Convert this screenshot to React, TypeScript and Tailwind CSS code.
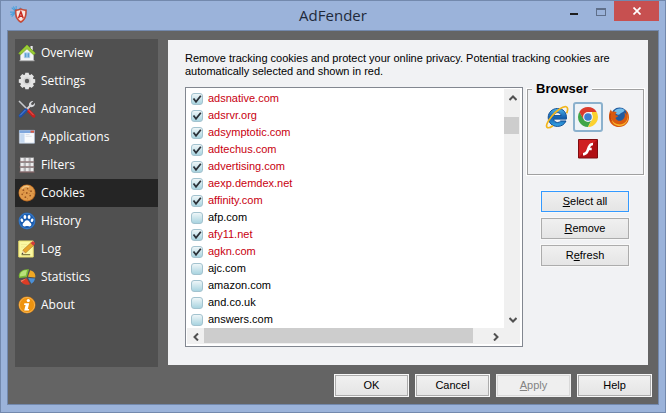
import type { ReactNode } from 'react';
import clsx from 'clsx';

function Icon({ children, className = 'size-[18px]' }: { children: ReactNode; className?: string }) {
  return (
    <svg viewBox="0 0 18 18" className={clsx('block shrink-0', className)} aria-hidden="true">
      {children}
    </svg>
  );
}

function OverviewIcon() {
  return (
    <Icon>
      <path d="M12.500 2h2.200v4h-2.200z" fill="#e8e8e8" />
      <path d="M2.500 9 9 3l6.500 6v7.500h-13z" fill="#f3f4f6" stroke="#c5c9d0" strokeWidth=".6" />
      <path d="M9 1 .8 9.200l1.600 1.600L9 4.600l6.600 6.200 1.600-1.600z" fill="#9acb35" stroke="#7fb02a" strokeWidth="1" />
      <path d="M6.300 8.800h5.400v5H6.300z" fill="#5b9fd4" stroke="#bcd6ec" strokeWidth=".7" />
      <path d="M9 9v4.600" stroke="#d4e8f7" strokeWidth=".8" />
      <path d="M1.500 16.700h15" stroke="#b9b9b9" />
    </Icon>
  );
}

function SettingsIcon() {
  return (
    <Icon>
      <g fill="#e4e4e4">
        <circle cx="9" cy="9" r="6.800" />
        <path d="M7.300.8h3.400l.5 3H6.800zM7.300 17.200h3.400l.5-3H6.800zM.8 7.300v3.400l3 .5V6.800zM17.200 7.300v3.400l-3 .5V6.800z" />
        <path d="m2 4.400 2.400-2.400 2.500 1.800L3.800 6.900zM16 4.400 13.600 2l-2.500 1.800 3.100 3.100zM2 13.600 4.400 16l2.500-1.800-3.100-3.100zM16 13.600 13.600 16l-2.500-1.800 3.100-3.100z" />
      </g>
      <circle cx="9" cy="9" r="3.800" fill="#d4d4d4" />
      <circle cx="9" cy="9" r="2.200" fill="#5a5a5a" />
    </Icon>
  );
}

function AdvancedIcon() {
  return (
    <Icon>
      <path d="m1 1 8.500 8.500" stroke="#c6c8cb" strokeWidth="1.600" />
      <path d="m9.300 9.300 6.300 6.600" stroke="#c6201e" strokeWidth="3.400" strokeLinecap="round" />
      <path d="m9.600 9 6 6.200" stroke="#f0756c" strokeWidth=".8" />
      <path d="m8 10 5-5" stroke="#d3d5d8" strokeWidth="2" />
      <path d="M11 5.600c-.4-2.600 1.600-4.900 4.300-4.600l-2.200 2.300.3 1.500 1.600.2 2-2.200c.4 2.800-1.800 4.900-4.600 4.300z" fill="#d9dbde" />
      <path d="m8 10-5.600 5.800" stroke="#1d4fa8" strokeWidth="3.400" strokeLinecap="round" />
      <path d="m7.500 9.900-5.400 5.500" stroke="#6d9ce4" strokeWidth=".8" />
    </Icon>
  );
}

function ApplicationsIcon() {
  return (
    <Icon>
      <path d="M1.400 2.400h15v12.800h-15z" fill="#eaf1fa" stroke="#b9c7da" strokeWidth=".8" />
      <path d="M1.400 2.400h15V5h-15z" fill="#7fa7dd" />
      <path d="M12.600 2.600h3.600v2.100h-3.600z" fill="#dc5a40" />
      <path d="M2.200 5.400h4.200v9.200H2.200z" fill="#c5d9f0" />
      <path d="M7 5.600h8.800v8.800H7z" fill="#f9fbfd" />
      <path d="M7.600 6.500h4M7.600 8.300h6" stroke="#d5dbe3" strokeWidth=".8" />
    </Icon>
  );
}

function FiltersIcon() {
  return (
    <Icon>
      {[2, 7, 12].map((y) => (
        <g key={y}>
          <path d={`M2 ${y - 0.5}h14v4.200h-14z`} fill="#b4b4b6" />
          <path d={`M3 ${y}h2.600v3.200H3zM8 ${y}h2.600v3.200H8zM12.800 ${y}h2.200v3.200h-2.200z`} fill="#ececed" />
          <path d={`M1.500 ${y + 4}h15`} stroke="#9c6f72" strokeWidth=".9" />
        </g>
      ))}
    </Icon>
  );
}

function CookiesIcon() {
  return (
    <Icon>
      <circle cx="9" cy="9" r="8.500" fill="#b96a23" />
      <circle cx="8.800" cy="8.700" r="7.800" fill="#e09a4a" />
      <path d="M4 4.600c2-2.300 5-2.600 7.200-1.800" stroke="#f3c785" strokeWidth="1.400" fill="none" />
      <g fill="#9a5420">
        <circle cx="5.400" cy="6.200" r=".9" />
        <circle cx="9.600" cy="4.800" r=".8" />
        <circle cx="13" cy="7.200" r=".9" />
        <circle cx="8.800" cy="9" r=".9" />
        <circle cx="4.200" cy="10.400" r=".8" />
        <circle cx="12.200" cy="11.600" r=".9" />
        <circle cx="7.400" cy="13.200" r=".9" />
      </g>
      <path d="m6.500 8.200-1.400.9M11.600 9.200l-1 1M10 14.400l-.8.6M14.800 9.600l.8.300M10.600 6.600l1 .2" stroke="#b2692a" strokeWidth=".8" />
    </Icon>
  );
}

function HistoryIcon() {
  return (
    <Icon>
      <circle cx="9" cy="9" r="8.500" fill="#2567b4" />
      <circle cx="9" cy="9" r="7.600" fill="#1a5cb0" stroke="#4a8ad4" strokeWidth=".6" />
      <g fill="#fff">
        <ellipse cx="6.900" cy="5" rx="1.400" ry="2.100" />
        <ellipse cx="11.100" cy="5" rx="1.400" ry="2.100" />
        <ellipse cx="3.900" cy="8.200" rx="1.300" ry="1.800" transform="rotate(-20 3.900 8.200)" />
        <ellipse cx="14.100" cy="8.200" rx="1.300" ry="1.800" transform="rotate(20 14.100 8.200)" />
        <path d="M9 8.200c2 0 2.500 1.800 3.600 2.800 1.500 1.400.5 3.700-1.300 3.400-1-.2-1.300-.5-2.300-.5s-1.300.3-2.300.5c-1.800.3-2.800-2-1.300-3.400C6.500 10 7 8.200 9 8.200z" />
      </g>
    </Icon>
  );
}

function LogIcon() {
  return (
    <Icon>
      <path d="M.8 1h14.400v16H.8z" fill="#fbf8a2" stroke="#e8dc6a" />
      <path d="M3 4.500h6M3 7h4" stroke="#f1eb92" />
      <path d="m3.600 14.200 1.200-4 2.800 2.800z" fill="#f2d6a8" />
      <path d="m4.800 10.200 8-7.400 2.700 2.800-7.900 7.400z" fill="#e9a52c" stroke="#9c6a17" strokeWidth=".5" />
      <path d="m12.600 3 1.600-1.500c1-.7 3.400 1.300 2.800 2.600L15.400 5.700z" fill="#d23a3a" />
      <path d="m3.600 14.200.5-1.600 1.200 1.100z" fill="#333" />
      <path d="M3.600 14.700h8.600" stroke="#6f6a35" strokeWidth="1.100" />
    </Icon>
  );
}

function StatisticsIcon() {
  return (
    <Icon>
      <path d="M8.800 9.200 1.200 10C-.6 4.800 4 .6 11 1.200z" fill="#7cba35" />
      <path d="M7.800 7.600 2 8.400C1.400 4.800 4.500 2.200 9 2z" fill="#b9e07a" />
      <path d="m10 8.800 2.200-6.600c3.600.8 5.700 4.200 5 7.200z" fill="#f0a824" />
      <path d="m10.200 10 6.800.6c-.5 2.400-1.800 4.200-3.600 5.200z" fill="#4a90d8" />
      <path d="m8.600 10.300 3.400 6c-3.500 1.300-7.600.2-9.500-3.500z" fill="#dc3c25" />
      <path d="m8.600 10.300-6.100 2.500.9 1.300z" fill="#f08468" />
    </Icon>
  );
}

function AboutIcon() {
  return (
    <Icon>
      <circle cx="9" cy="9" r="8.500" fill="#d97d0a" />
      <circle cx="9" cy="9" r="7.600" fill="#ee930f" stroke="#f9c36b" strokeWidth=".7" />
      <circle cx="10.300" cy="4.500" r="1.600" fill="#fff" />
      <path d="M6.400 7.300h4.800l-1.400 5.600h1.400l-.4 1.700H6.200l1.400-5.600H6z" fill="#fff" />
    </Icon>
  );
}

function AppLogo() {
  return (
    <Icon className="size-[17px]">
      <g stroke="#4ba1dc" strokeWidth="1.200">
        <path d="M6.500 0v13M0 6.500h12M1.800 1.800l9.400 9.400M11.200 1.800l-9.400 9.400M3.600.6l5.800 11.800M.6 9.400 12.400 3.600" />
      </g>
      <path d="M11.500 2.500c1.500 1.200 3.500 1.500 6 1.400.3 6-.8 11-6 13.800-5.200-2.800-6.300-7.800-6-13.800 2.500.1 4.500-.2 6-1.400z" fill="#d24a35" stroke="#a8432f" strokeWidth=".5" />
      <path d="M11.500 4.100c1.300.8 2.800 1.200 4.600 1.200.1 5-1 8.400-4.600 10.700-3.600-2.300-4.700-5.700-4.600-10.700 1.800 0 3.300-.4 4.600-1.200z" fill="#f9e7df" />
      <path d="m9 13 2.500-7 2.500 7M9.800 10.900h3.400" fill="none" stroke="#c8281e" strokeWidth="1.500" />
    </Icon>
  );
}

function IeIcon() {
  return (
    <svg viewBox="0 0 24 24" className="size-6" aria-hidden="true">
      <defs>
        <linearGradient id="ie" x1="0" y1="0" x2="0" y2="1">
          <stop offset="0" stopColor="#4fb6ec" />
          <stop offset=".5" stopColor="#1460b0" />
          <stop offset="1" stopColor="#35a6e6" />
        </linearGradient>
      </defs>
      <path
        d="M12.500 3.500c-5.300 0-9.300 3.900-9.300 9s3.900 8.900 9.300 8.900c4 0 7-2 8.500-5.400h-5.400c-.7 1-1.700 1.500-3 1.500-2.200 0-3.600-1.300-3.900-3.400h12.700C22 7.600 18.400 3.500 12.500 3.500zM8.800 10.600c.4-1.900 1.700-3 3.700-3s3.300 1.100 3.600 3z"
        fill="url(#ie)"
        stroke="#124f94"
        strokeWidth="1"
      />
      <path d="M21.700 8.200c1.400-3.500 1.300-6-.6-6.500-3-.8-9.500 3.800-14.300 9.600-4.800 5.700-6.500 10.400-4.300 11.300 1.300.5 3.200-.3 5.400-1.900" fill="none" stroke="#f2b61c" strokeWidth="1.700" />
    </svg>
  );
}

function ChromeIcon() {
  return (
    <svg viewBox="0 0 20 20" className="size-5" aria-hidden="true">
      <path d="M1.340 5A10 10 0 0 0 10 20l4-8-8.600-.5z" fill="#3fa648" />
      <path d="M18.660 5A10 10 0 0 1 10 20l4-7.700V5z" fill="#fbd12f" />
      <path d="M10 5h8.660A10 10 0 0 0 1.340 5l4.330 7.500z" fill="#db3b2c" />
      <circle cx="10" cy="10" r="4.900" fill="#f4f4f4" />
      <circle cx="10" cy="10" r="3.800" fill="#3d7fd0" />
    </svg>
  );
}

function FirefoxIcon() {
  return (
    <svg viewBox="0 0 20 20" className="size-5" aria-hidden="true">
      <circle cx="10.500" cy="9" r="8.500" fill="#215a9e" />
      <path d="M5 4.500C7 1.500 12 .5 15.500 3c-.5 2.500-3 2-4.500 4-1.500 1.500-4 .5-6-2.500z" fill="#74bdea" />
      <path
        d="M1.800 2.500c.4 1.200 1 1.900 1.800 2.300 1.500-.5 2.900-.2 4.200.8-1.400.6-1.700 1.500-1 2.600l2.400.5c-.4 1.300-1.900 1.500-2.700 2.300.9 2.600 4 3.600 6.400 2.200 2.900-1.400 3.600-4.700 2.400-7.700 1.300.8 2 1.600 2.200 2.600.2-2-.2-3.700-1.300-5.600 2.700 2 3.900 5 3.800 8.300-.3 5.300-4.400 9.200-9.900 9.200C4.300 20 0 15.800 0 10.400 0 7.200.4 4.700 1.800 2.500z"
        fill="#d9590f"
      />
      <path d="M18.700 7c.8 5.800-2.700 10.400-8 10.400-4 0-6.800-2.200-8.300-5.400 1 5 4.700 7 8.200 7 5.700 0 10-5.400 8.100-12z" fill="#f9b52b" />
      <path d="M1.500 6.500C.6 9.500 1 12 2.200 14" fill="none" stroke="#b53a0c" />
    </svg>
  );
}

function FlashIcon() {
  return (
    <svg viewBox="0 0 20 20" className="size-5" aria-hidden="true">
      <path d="M.5.500h19v18.500H.5z" fill="#b01014" stroke="#7f0d10" />
      <path d="M1 1h18L1 18z" fill="#cf2022" />
      <path d="M15 3.800c-3.600.1-4.900 2.700-6 5.800-1 3-1.900 4.200-4 4.400v2.500c3.600-.1 5.200-2.500 6.200-5.300h2.500V8.800h-1.600c.6-1.500 1.300-2.500 2.900-2.600z" fill="#fff" />
    </svg>
  );
}

const navItems = [
  { label: 'Overview', icon: <OverviewIcon /> },
  { label: 'Settings', icon: <SettingsIcon /> },
  { label: 'Advanced', icon: <AdvancedIcon /> },
  { label: 'Applications', icon: <ApplicationsIcon /> },
  { label: 'Filters', icon: <FiltersIcon /> },
  { label: 'Cookies', icon: <CookiesIcon />, active: true },
  { label: 'History', icon: <HistoryIcon /> },
  { label: 'Log', icon: <LogIcon /> },
  { label: 'Statistics', icon: <StatisticsIcon /> },
  { label: 'About', icon: <AboutIcon /> },
];

const cookies = [
  { domain: 'adsnative.com', tracking: true },
  { domain: 'adsrvr.org', tracking: true },
  { domain: 'adsymptotic.com', tracking: true },
  { domain: 'adtechus.com', tracking: true },
  { domain: 'advertising.com', tracking: true },
  { domain: 'aexp.demdex.net', tracking: true },
  { domain: 'affinity.com', tracking: true },
  { domain: 'afp.com', tracking: false },
  { domain: 'afy11.net', tracking: true },
  { domain: 'agkn.com', tracking: true },
  { domain: 'ajc.com', tracking: false },
  { domain: 'amazon.com', tracking: false },
  { domain: 'and.co.uk', tracking: false },
  { domain: 'answers.com', tracking: false },
];

function TitleBar() {
  return (
    <header className="grid h-[29px] grid-cols-[1fr_auto_1fr] items-start">
      <div className="pt-[5px] pl-[9px]">
        <AppLogo />
      </div>
      <h1 className="pt-1 font-['Open_Sans',sans-serif] text-[15px] leading-5 text-[#1f2a3a]">AdFender</h1>
      <div className="flex justify-end pr-1.5">
        <button aria-label="Minimize" className="flex h-5 w-7 items-center justify-center pt-1.5">
          <span className="h-0.5 w-2 bg-[#1e1e1e]" />
        </button>
        <button aria-label="Maximize" className="flex h-5 w-[26px] items-center justify-center pt-0.5">
          <span className="h-2 w-2.5 border border-t-2 border-[#5f6f8a]" />
        </button>
        <button aria-label="Close" className="flex h-5 w-[45px] items-center justify-center bg-[#c75050]">
          <svg viewBox="0 0 8 8" className="size-2" aria-hidden="true">
            <path d="m.5.500 7 7m0-7-7 7" stroke="#fff" strokeWidth="1.700" />
          </svg>
        </button>
      </div>
    </header>
  );
}

function Sidebar() {
  return (
    <nav className="w-[143px] shrink-0 bg-[#505050] font-['Open_Sans',sans-serif] text-xs text-white">
      {navItems.map((item) => (
        <a
          key={item.label}
          href="#"
          className={clsx('flex h-7 items-center gap-[5px] pl-[3px]', item.active && 'bg-[#252525]')}
        >
          {item.icon}
          {item.label}
        </a>
      ))}
    </nav>
  );
}

function Arrow({ d, label }: { d: string; label: string }) {
  return (
    <button aria-label={label} className="flex size-[17px] shrink-0 items-center justify-center">
      <svg viewBox="0 0 8 8" className="size-2" aria-hidden="true">
        <path d={d} fill="none" stroke="#505050" strokeWidth="2" />
      </svg>
    </button>
  );
}

function CookieList() {
  return (
    <div className="grid h-[260px] min-w-0 flex-1 grid-cols-[1fr_16px] grid-rows-[1fr_16px] border border-[#828790] bg-white p-px pr-0.5 pb-0.5">
      <ul className="overflow-hidden pt-px">
        {cookies.map(({ domain, tracking }) => (
          <li key={domain}>
            <label className={clsx('flex h-[17px] items-center gap-[5px] pl-1', tracking ? 'text-[#c8000f]' : 'text-black')}>
              <span className="grid">
                <input
                  type="checkbox"
                  defaultChecked={tracking}
                  className="peer col-start-1 row-start-1 size-3 appearance-none rounded-[3px] border border-[#a3c3cf] bg-linear-to-b from-[#eef6f8] to-[#a9d4e0]"
                />
                <svg viewBox="0 0 12 12" className="invisible col-start-1 row-start-1 size-3 peer-checked:visible" aria-hidden="true">
                  <path d="m2.500 5.500 2.500 3.200 4.800-6" fill="none" stroke="#2b3138" strokeWidth="1.800" />
                </svg>
              </span>
              {domain}
            </label>
          </li>
        ))}
      </ul>
      <div className="flex flex-col bg-[#f0f0f0]">
        <Arrow label="Scroll up" d="M.5 6 4 2.500 7.500 6" />
        <div className="flex-1 pt-[11px]">
          <div className="h-[17px] w-[15px] bg-[#cdcdcd]" />
        </div>
        <Arrow label="Scroll down" d="M.5 2 4 5.500 7.500 2" />
      </div>
      <div className="flex bg-[#f0f0f0]">
        <Arrow label="Scroll left" d="M6 .5 2.500 4 6 7.500" />
        <div className="flex-1 pr-3.5">
          <div className="h-[15px] bg-[#cdcdcd]" />
        </div>
        <Arrow label="Scroll right" d="M2 .5 5.500 4 2 7.500" />
      </div>
      <div className="bg-[#f0f0f0]" />
    </div>
  );
}

function PushButton({ children, className, disabled }: { children: ReactNode; className?: string; disabled?: boolean }) {
  return (
    <button
      disabled={disabled}
      className={clsx(
        'h-[21px] border bg-linear-to-b outline-1',
        disabled ? 'border-[#d9d9d9] from-[#efefef] to-[#efefef] text-[#838383] outline-[#f0f0f0]' : 'from-[#f0f0f0] to-[#e5e5e5] text-black outline-[#f8f8f8]',
        className,
      )}
    >
      {children}
    </button>
  );
}

function BrowserPicker() {
  return (
    <fieldset className="relative mt-0.5 h-[86px] w-[117px] border border-[#a0a0a0] pl-[5px] outline-1 outline-white">
      <legend className="absolute -top-[9px] left-1 bg-[#f1f2f4] px-1 text-[13px] leading-4 font-bold">Browser</legend>
      <div className="flex items-center justify-center gap-px pt-3">
        <button aria-label="Internet Explorer" className="flex size-[30px] items-center justify-center">
          <IeIcon />
        </button>
        <button
          aria-label="Chrome"
          aria-pressed="true"
          className="flex size-[30px] items-center justify-center rounded-[3px] border-2 border-[#8bb1cd] bg-[#eef3f7]"
        >
          <ChromeIcon />
        </button>
        <button aria-label="Firefox" className="flex size-[30px] items-center justify-center">
          <FirefoxIcon />
        </button>
      </div>
      <div className="flex justify-center pt-[7px]">
        <button aria-label="Flash">
          <FlashIcon />
        </button>
      </div>
    </fieldset>
  );
}

export default function App() {
  return (
    <div className="flex h-screen min-h-[413px] flex-col border border-[#7389ad] bg-[#9bb3da] px-1.5 pb-[7px] font-['Liberation_Sans',Arial,sans-serif] text-[11px] leading-[13px] text-black">
      <div className="-mx-1.5">
        <TitleBar />
      </div>
      <main className="flex flex-1 flex-col border border-[#7389ad] bg-[#646464]">
        <div className="flex flex-1 gap-2.5 pt-2 pr-2.5 pl-[7px]">
          <Sidebar />
          <section className="mt-px mb-0.5 min-w-0 flex-1 bg-[#f1f2f4] pt-3 pr-1 pl-[17px]">
            <p className="pr-5">
              Remove tracking cookies and protect your online privacy. Potential tracking cookies are automatically
              selected and shown in red.
            </p>
            <div className="mt-[9px] flex gap-1">
              <CookieList />
              <div className="flex shrink-0 flex-col">
                <BrowserPicker />
                <div className="flex flex-col gap-1.5 pt-4 pr-[15px] pl-3.5">
                  <PushButton className="border-[#3399ff]">
                    <u>S</u>elect all
                  </PushButton>
                  <PushButton className="border-[#acacac]">
                    <u>R</u>emove
                  </PushButton>
                  <PushButton className="border-[#acacac]">
                    R<u>e</u>fresh
                  </PushButton>
                </div>
              </div>
            </div>
          </section>
        </div>
        <footer className="flex justify-end gap-2 pt-2 pr-[7px] pb-2">
          <PushButton className="w-[73px] border-[#acacac]">OK</PushButton>
          <PushButton className="w-[73px] border-[#acacac]">Cancel</PushButton>
          <PushButton className="w-[73px]" disabled>
            <u>A</u>pply
          </PushButton>
          <PushButton className="w-[73px] border-[#acacac]">Help</PushButton>
        </footer>
      </main>
    </div>
  );
}
